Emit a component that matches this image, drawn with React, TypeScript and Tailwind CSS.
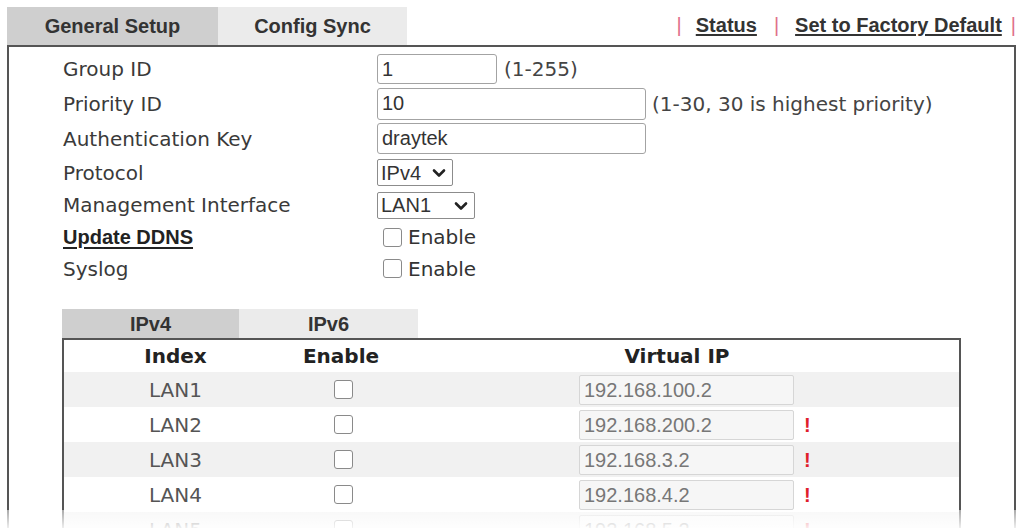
import React from 'react';

const verdana = "font-['DejaVu_Sans',Verdana,sans-serif]";
const arial = "font-['Liberation_Sans',Arial,sans-serif]";

const Box = () => (
  <span className="inline-block h-[19px] w-[19px] rounded-[3px] border border-[#8a8a8a] bg-white" />
);

const Select = ({ value, width }: { value: string; width: string }) => (
  <div
    className={`flex h-[27px] ${width} items-center justify-between rounded-[2px] border border-[#8c8c8c] bg-white pl-[3px] pr-[6px] text-[20px] text-[#333] ${arial}`}
  >
    <span>{value}</span>
    <svg width="14" height="10" viewBox="0 0 14 10" className="mt-[1px]">
      <path d="M2 2.5 L7 7.5 L12 2.5" fill="none" stroke="#222" strokeWidth="2.6" strokeLinecap="round" strokeLinejoin="round" />
    </svg>
  </div>
);

const Check = () => (
  <label className={`ml-[6px] flex items-center text-[20px] text-[#333] ${verdana}`}>
    <Box />
    <span className="ml-[6px]">Enable</span>
  </label>
);

const rows: { label: React.ReactNode; h: string; field: React.ReactNode }[] = [
  {
    label: 'Group ID',
    h: 'h-[35px]',
    field: (
      <div className="flex items-center">
        <input readOnly value="1" className={`h-[30px] w-[120px] rounded-[3px] border border-[#a3a3a3] px-[4px] text-[20px] text-[#333] ${arial}`} />
        <span className="ml-[7px] text-[20px] text-[#444]">(1-255)</span>
      </div>
    ),
  },
  {
    label: 'Priority ID',
    h: 'h-[35px]',
    field: (
      <div className="flex items-center">
        <input readOnly value="10" className={`h-[32px] w-[269px] rounded-[3px] border border-[#a3a3a3] px-[4px] text-[20px] text-[#333] ${arial}`} />
        <span className="ml-[6px] text-[20px] text-[#444]">(1-30, 30 is highest priority)</span>
      </div>
    ),
  },
  {
    label: 'Authentication Key',
    h: 'h-[35px]',
    field: (
      <input readOnly value="draytek" className={`h-[31px] w-[269px] rounded-[3px] border border-[#a3a3a3] px-[4px] text-[20px] text-[#333] ${arial}`} />
    ),
  },
  { label: 'Protocol', h: 'h-[33px]', field: <Select value="IPv4" width="w-[76px]" /> },
  { label: 'Management Interface', h: 'h-[32px]', field: <Select value="LAN1" width="w-[98px]" /> },
  {
    label: <span className={`font-bold text-[#222] underline underline-offset-[3px] ${arial}`}>Update DDNS</span>,
    h: 'h-[32px]',
    field: <Check />,
  },
  { label: 'Syslog', h: 'h-[31px]', field: <Check /> },
];

const lans = [
  { name: 'LAN1', ip: '192.168.100.2', warn: false },
  { name: 'LAN2', ip: '192.168.200.2', warn: true },
  { name: 'LAN3', ip: '192.168.3.2', warn: true },
  { name: 'LAN4', ip: '192.168.4.2', warn: true },
  { name: 'LAN5', ip: '192.168.5.2', warn: true },
];

export default function App() {
  return (
    <div className={`relative h-[528px] w-[1020px] overflow-hidden bg-white ${verdana}`}>
      {/* top tabs + links */}
      <div className="flex h-[45px] items-end pl-[7px] pr-[4px]">
        <div className={`flex h-[38px] w-[211px] items-center justify-center bg-[#cfcfcf] text-[20px] font-bold text-[#333] ${arial}`}>
          General Setup
        </div>
        <div className={`flex h-[38px] w-[189px] items-center justify-center bg-[#ebebeb] text-[20px] font-bold text-[#333] ${arial}`}>
          Config Sync
        </div>
        <div className={`ml-auto flex h-[38px] items-center pb-[2px] text-[20px] font-bold text-[#333] ${arial}`}>
          <span className="font-normal text-[#e0708a]">|</span>
          <a className="ml-[14px] underline underline-offset-[2px]">Status</a>
          <span className="ml-[17px] font-normal text-[#e0708a]">|</span>
          <a className="ml-[16px] underline underline-offset-[2px]">Set to Factory Default</a>
          <span className="ml-[9px] font-normal text-[#e0708a]">|</span>
        </div>
      </div>

      {/* main box */}
      <div className="ml-[7px] h-[600px] w-[1009px] border-x-2 border-t-2 border-[#555] pt-[4px]">
        <div className="pl-[54px]">
          {rows.map((r, i) => (
            <div key={i} className={`flex items-center ${r.h}`}>
              <div className="w-[314px] text-[20px] text-[#3a3a3a]">{r.label}</div>
              {r.field}
            </div>
          ))}
        </div>

        {/* IPv4 / IPv6 sub tabs */}
        <div className="ml-[53px] mt-[25px] flex h-[29px]">
          <div className={`flex w-[177px] items-center justify-center bg-[#cfcfcf] text-[20px] font-bold text-[#333] ${arial}`}>IPv4</div>
          <div className={`flex w-[179px] items-center justify-center bg-[#ebebeb] text-[20px] font-bold text-[#333] ${arial}`}>IPv6</div>
        </div>

        <div className="ml-[53px] w-[899px] border-x-2 border-t-2 border-[#555]">
          <div className="flex h-[32px] items-center text-[20px] font-bold text-[#222]">
            <div className="w-[223px] text-center">Index</div>
            <div className="w-[108px] text-center">Enable</div>
            <div className="flex-1 text-center">Virtual IP</div>
          </div>
          {lans.map((l, i) => (
            <div key={l.name} className={`flex h-[35px] items-center ${i % 2 === 0 ? 'bg-[#f1f1f1]' : 'bg-white'}`}>
              <div className="w-[223px] text-center text-[20px] text-[#555]">{l.name}</div>
              <div className="flex w-[108px] justify-center pl-[4px]">
                <Box />
              </div>
              <input
                readOnly
                value={l.ip}
                className={`ml-[184px] h-[30px] w-[215px] rounded-[2px] border border-[#d6d6d6] bg-[#f6f6f6] px-[4px] text-[20px] text-[#777] ${arial}`}
              />
              {l.warn && <span className={`ml-[10px] text-[20px] font-bold text-[#e0202a] ${arial}`}>!</span>}
            </div>
          ))}
        </div>
      </div>

      {/* fade at the bottom edge of the screenshot */}
      <div className="pointer-events-none absolute bottom-0 left-0 right-0 h-[18px] bg-gradient-to-b from-white/50 to-white/90" />
    </div>
  );
}
